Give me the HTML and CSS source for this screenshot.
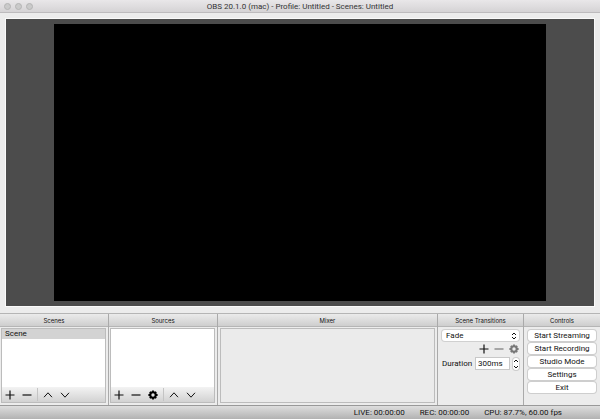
FILE: index.html
```html
<!DOCTYPE html>
<html lang="en">

<head>
<title>OBS 20.1.0 (mac)</title>
<meta charset="UTF-8">
<meta name="viewport" content="width=device-width, initial-scale=1.0">
<link rel="stylesheet" href="styles.css">
</head>

<body>
<header class="titlebar">
<div class="lights"><span></span><span></span><span></span></div>
<h1>OBS 20.1.0 (mac) - Profile: Untitled - Scenes: Untitled</h1>
</header>

<main class="preview">
<div class="canvas"></div>
</main>

<div class="docks">
<section class="dock">
<h2>Scenes</h2>
<div class="box">
<ul class="list"><li>Scene</li></ul>
<div class="toolbar">
<button aria-label="Add scene"><svg viewBox="0 0 10 10"><path d="M5 .5v9M.5 5h9"/></svg></button>
<button aria-label="Remove scene"><svg viewBox="0 0 10 10"><path d="M.5 5h9"/></svg></button>
<i class="sep"></i>
<button aria-label="Move scene up"><svg class="thin" viewBox="0 0 10 10"><path d="M1 7.2l4-4.4 4 4.4"/></svg></button>
<button aria-label="Move scene down"><svg class="thin" viewBox="0 0 10 10"><path d="M1 2.8l4 4.4 4-4.4"/></svg></button>
</div>
</div>
</section>

<section class="dock">
<h2>Sources</h2>
<div class="box">
<ul class="list"></ul>
<div class="toolbar">
<button aria-label="Add source"><svg viewBox="0 0 10 10"><path d="M5 .5v9M.5 5h9"/></svg></button>
<button aria-label="Remove source"><svg viewBox="0 0 10 10"><path d="M.5 5h9"/></svg></button>
<button aria-label="Source properties"><svg class="gear" viewBox="0 0 10 10"><circle cx="5" cy="5" r="2.7"/><path d="M5 .4v1.8M5 7.8v1.8M.4 5h1.8M7.8 5h1.8M1.8 1.8l1.2 1.2M7 7l1.2 1.2M8.2 1.8L7 3M3 7L1.8 8.2"/></svg></button>
<i class="sep"></i>
<button aria-label="Move source up"><svg class="thin" viewBox="0 0 10 10"><path d="M1 7.2l4-4.4 4 4.4"/></svg></button>
<button aria-label="Move source down"><svg class="thin" viewBox="0 0 10 10"><path d="M1 2.8l4 4.4 4-4.4"/></svg></button>
</div>
</div>
</section>

<section class="dock">
<h2>Mixer</h2>
<div class="box mixer"></div>
</section>

<section class="dock">
<h2>Scene Transitions</h2>
<div class="transitions">
<div class="field">
<select aria-label="Transition"><option>Fade</option></select>
<svg class="arrows" viewBox="0 0 6 8"><path d="M1 3l2-2 2 2M1 5l2 2 2-2"/></svg>
</div>
<div class="tools">
<button aria-label="Add transition"><svg viewBox="0 0 10 10"><path d="M5 .5v9M.5 5h9"/></svg></button>
<button class="dim" aria-label="Remove transition"><svg viewBox="0 0 10 10"><path d="M.5 5h9"/></svg></button>
<button class="dim" aria-label="Transition properties"><svg class="gear" viewBox="0 0 10 10"><circle cx="5" cy="5" r="2.7"/><path d="M5 .4v1.8M5 7.8v1.8M.4 5h1.8M7.8 5h1.8M1.8 1.8l1.2 1.2M7 7l1.2 1.2M8.2 1.8L7 3M3 7L1.8 8.2"/></svg></button>
</div>
<div class="duration">
<label for="duration">Duration</label>
<input type="text" id="duration" value="300ms">
<button class="stepper" aria-label="Change duration"><svg viewBox="0 0 6 10"><path d="M1 3l2-2 2 2M1 7l2 2 2-2"/></svg></button>
</div>
</div>
</section>

<section class="dock">
<h2>Controls</h2>
<div class="controls">
<button>Start Streaming</button>
<button>Start Recording</button>
<button>Studio Mode</button>
<button>Settings</button>
<button>Exit</button>
</div>
</section>
</div>

<footer class="status">
<span>LIVE: 00:00:00</span>
<span>REC: 00:00:00</span>
<span>CPU: 87.7%, 60.00 fps</span>
</footer>
</body>
</html>
```
FILE: styles.css
```css
* {
    box-sizing: border-box;
}
body {
    display: flex;
    flex-direction: column;
    height: 100vh;
    margin: 0;
    background: #ececec;
    color: #111;
    font-family: Roboto, Inter, sans-serif;
    font-size: 8px;
    line-height: 10px;
}
h1, h2, ul {
    margin: 0;
    padding: 0;
    font-size: inherit;
    font-weight: normal;
}
button, input, select {
    margin: 0;
    padding: 0;
    border: 0;
    background: none;
    color: inherit;
    font: inherit;
}
svg {
    display: block;
    width: 10px;
    height: 10px;
    fill: none;
    stroke: currentColor;
    stroke-width: 1.2;
}
.titlebar {
    display: grid;
    grid-template-columns: 1fr auto 1fr;
    align-items: center;
    height: 13px;
    padding-top: 1px;
    border-bottom: 1px solid #bdbbbd;
    background: linear-gradient(#e9e7e9, #d5d3d5);
    color: #333;
}
.lights {
    display: flex;
    gap: 4px;
    padding-left: 4px;
}
.lights span {
    width: 7px;
    height: 7px;
    border: 1px solid #b4b4b4;
    border-radius: 50%;
    background: #cacaca;
}
.preview {
    display: flex;
    flex: 1;
    justify-content: center;
    min-height: 0;
    margin: 6px 6px 7px;
    padding: 5px;
    background: #4c4c4c;
    box-shadow: 0 0 0 1px #fafafa;
}
.canvas {
    height: 100%;
    aspect-ratio: 16 / 9;
    background: #000;
}
.docks {
    display: grid;
    grid-template-columns: 109fr 109fr 220fr 86fr 76fr;
    height: 92px;
    border-top: 1px solid #b5b5b5;
}
.dock {
    display: flex;
    flex-direction: column;
    min-width: 0;
    border-right: 1px solid #aaa;
}
.dock:last-child {
    border-right: 0;
}
.dock h2 {
    height: 13px;
    border-bottom: 1px solid #b5b5b5;
    background: linear-gradient(#ebebeb, #cecece);
    font-family: Inter, Roboto, sans-serif;
    font-size: 6px;
    line-height: 13px;
    text-align: center;
}
.box {
    display: flex;
    flex: 1;
    flex-direction: column;
    margin: 1px 2px 2px 1px;
    border: 1px solid #bcbcbc;
    background: #fff;
}
.mixer {
    margin-left: 2px;
    background: #ebebeb;
}
.list {
    flex: 1;
    list-style: none;
}
.list li {
    padding: 0 3px;
    background: #d3d3d3;
}
.toolbar {
    display: flex;
    align-items: center;
    gap: 7px;
    height: 15px;
    padding: 0 3px;
    background: linear-gradient(#f3f3f3, #d2d2d2);
}
.sep {
    width: 1px;
    height: 13px;
    margin: 0 -2px;
    background: #c4c4c4;
}
.thin {
    stroke-width: 1;
}
.gear circle {
    stroke-width: 2;
}
.gear path {
    stroke-width: 1.8;
}
.toolbar .gear {
    color: #000;
}
.transitions {
    display: flex;
    flex-direction: column;
    gap: 3px;
    padding: 3px 4px;
}
.field {
    position: relative;
}
.field select {
    display: block;
    width: 100%;
    height: 11px;
    padding: 0 4px;
    border-radius: 3px;
    background: #fff;
    box-shadow: 0 0 0 1px #d0d0d0;
    appearance: none;
}
.arrows {
    position: absolute;
    top: 2px;
    right: 2px;
    width: 6px;
    height: 8px;
    stroke-width: 1;
    pointer-events: none;
}
.tools {
    display: flex;
    justify-content: flex-end;
    gap: 5px;
}
.dim {
    color: #777;
}
.duration {
    display: flex;
    align-items: center;
    gap: 3px;
}
.duration input {
    flex: 1;
    min-width: 0;
    height: 13px;
    padding: 0 2px;
    border: 1px solid #c8c8c8;
    background: #fff;
}
.stepper {
    display: flex;
    align-items: center;
    width: 6px;
    height: 12px;
    border-radius: 3px;
    background: #fff;
    box-shadow: 0 0 0 1px #ccc;
}
.stepper svg {
    width: 6px;
    stroke-width: 1;
}
.controls {
    display: flex;
    flex-direction: column;
    gap: 2px;
    padding: 3px 4px;
}
.controls button {
    height: 11px;
    border-radius: 3px;
    background: #fff;
    box-shadow: 0 0 0 1px #cecece;
}
.status {
    display: flex;
    align-items: center;
    justify-content: flex-end;
    gap: 15px;
    height: 14px;
    padding-right: 38px;
    border-top: 1px solid #999;
    background: linear-gradient(#dedede, #b2b2b2);
}
```
